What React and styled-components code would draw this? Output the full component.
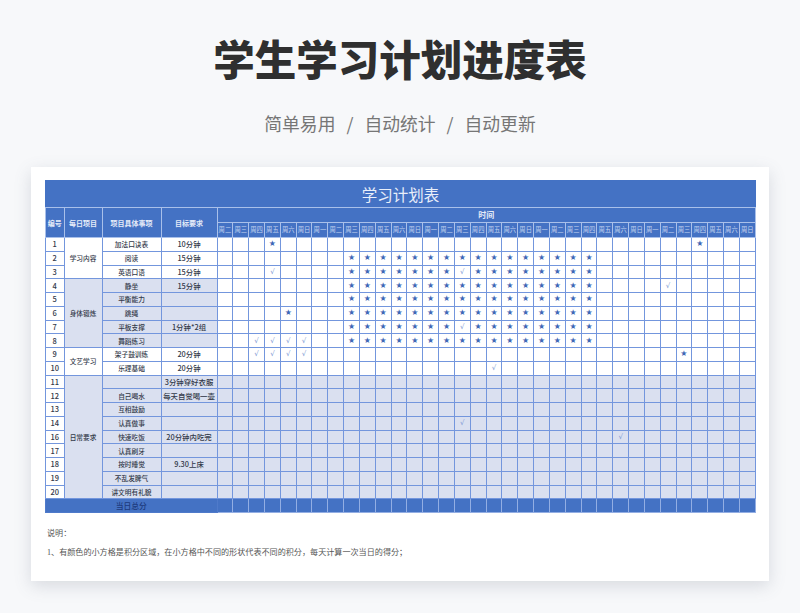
import React from 'react';
import styled, { createGlobalStyle } from 'styled-components';

const Global = createGlobalStyle`
  html, body { margin: 0; padding: 0; background: #f7f8fa; }
  #root { width: 800px; height: 613px; overflow: hidden; }
`;
const CJK = `"Noto Sans CJK SC", "Noto Sans", sans-serif`;
const BLUE = '#4472c4';
const GRID = '#7396dd';
const Page = styled.div`
  width: 800px; height: 613px; box-sizing: border-box; padding-top: 32px;
  display: flex; flex-direction: column; align-items: center;
  background: #f7f8fa; font-family: ${CJK};
`;
const Title = styled.h1`
  margin: 0; height: 52px; line-height: 52px; font-size: 41.5px; font-weight: 900; color: #2f2f2f;
`;
const Subtitle = styled.div`
  margin-top: 27px; height: 24px; line-height: 24px; font-size: 17.8px; color: #767676;
  display: flex; gap: 11px; white-space: pre;
`;
const Card = styled.section`
  margin-top: 32px; width: 738px; height: 414px; box-sizing: border-box; padding: 13px 14px 0 14px;
  background: #fff; box-shadow: 0 5px 16px rgba(90, 100, 120, 0.2);
`;
const Sheet = styled.table`
  width: 710px; table-layout: fixed; border-collapse: collapse; font-family: ${CJK};
  border: 1px solid ${GRID};
`;
const TitleCell = styled.th`
  height: 26px; padding: 0; background: ${BLUE}; color: #e9effa; font-size: 15.5px; font-weight: 400;
  border: 1px solid ${BLUE}; border-bottom: 1px solid #a9c0ea;
`;
const HeadCell = styled.th`
  padding: 0; background: ${BLUE}; color: #e4ebf8; font-size: ${p => p.$size || 7}px; font-weight: 700;
  border: 1px solid #a9c0ea; white-space: nowrap; overflow: hidden;
  height: 14px; line-height: 12px;
`;
const DayCell = styled.th`
  padding: 0; background: ${BLUE}; color: #c3d2ef; font-size: 6.3px; font-weight: 400;
  border: 1px solid #a9c0ea; white-space: nowrap; overflow: hidden; height: 14px; line-height: 12px;
`;
const Row = styled.tr`
  height: 13.75px;
`;
const Cell = styled.td`
  padding: 0; height: 12.75px; line-height: 12px; text-align: center; white-space: nowrap; overflow: hidden;
  border: 1px solid ${GRID}; font-size: ${p => p.$size || 6.7}px; font-weight: 500;
  color: ${p => p.$color || '#333a4a'};
  background: ${p => (p.$shade ? '#dae0f0' : '#fff')};
`;
const Mark = styled.td`
  padding: 0; height: 12.75px; line-height: 12px; text-align: center; overflow: hidden;
  border: 1px solid ${GRID}; font-size: ${p => (p.$check ? 7 : 8)}px; color: ${p => (p.$check ? '#7f9bd4' : '#3f68b6')};
  font-family: "DejaVu Sans", sans-serif;
  background: ${p => (p.$shade ? '#dae0f0' : '#fff')};
`;
const TotalLabel = styled.td`
  padding: 0; height: 13px; background: ${BLUE}; color: #1d3a7c; font-size: 7.8px; font-weight: 500;
  text-align: center; border: 1px solid #4f7aca;
`;
const TotalCell = styled.td`
  padding: 0; background: ${BLUE}; border: 1px solid #93aee3;
`;
const Notes = styled.div`
  margin-top: 15px; padding-left: 2px; color: #555; font-family: "Liberation Serif", "Noto Sans CJK SC", serif;
  font-size: 8.1px; line-height: 12px;
`;
const Note = styled.p`
  margin: 0 0 7px; white-space: nowrap;
`;

const dayNames = ['周二','周三','周四','周五','周六','周日','周一','周二','周三','周四','周五','周六','周日','周一','周二','周三','周四','周五','周六','周日','周一','周二','周三','周四','周五','周六','周日','周一','周二','周三','周四','周五','周六','周日'];

const rows = [
  { n: 1, item: '加法口诀表', goal: '10分钟', marks: { 3: 's', 30: 's' } },
  { n: 2, item: '阅读', goal: '15分钟', band: 1 },
  { n: 3, item: '英语口语', goal: '15分钟', band: 1, marks: { 3: 'c', 15: 'c' } },
  { n: 4, item: '静坐', goal: '15分钟', band: 1, shade: 1, marks: { 28: 'c' } },
  { n: 5, item: '平衡能力', goal: '', band: 1, shade: 1 },
  { n: 6, item: '跳绳', goal: '', band: 1, shade: 1, marks: { 4: 's' } },
  { n: 7, item: '平板支撑', goal: '1分钟*2组', band: 1, shade: 1, marks: { 15: 'c' } },
  { n: 8, item: '舞蹈练习', goal: '', band: 1, shade: 1, marks: { 2: 'c', 3: 'c', 4: 'c', 5: 'c' } },
  { n: 9, item: '架子鼓训练', goal: '20分钟', marks: { 2: 'c', 3: 'c', 4: 'c', 5: 'c', 29: 's' } },
  { n: 10, item: '乐理基础', goal: '20分钟', marks: { 17: 'c' } },
  { n: 11, item: '', goal: '3分钟穿好衣服', shade: 1, grey: 1 },
  { n: 12, item: '自己喝水', goal: '每天自觉喝一壶', shade: 1, grey: 1 },
  { n: 13, item: '互相鼓励', goal: '', shade: 1, grey: 1 },
  { n: 14, item: '认真做事', goal: '', shade: 1, grey: 1, marks: { 15: 'c' } },
  { n: 16, item: '快速吃饭', goal: '20分钟内吃完', shade: 1, grey: 1, marks: { 25: 'c' } },
  { n: 17, item: '认真刷牙', goal: '', shade: 1, grey: 1 },
  { n: 18, item: '按时睡觉', goal: '9.30上床', shade: 1, grey: 1 },
  { n: 19, item: '不乱发脾气', goal: '', shade: 1, grey: 1 },
  { n: 20, item: '讲文明有礼貌', goal: '', shade: 1, grey: 1 },
];
const groups = { 0: { label: '学习内容', span: 3 }, 3: { label: '身体锻炼', span: 5, shade: 1 }, 8: { label: '文艺学习', span: 2 }, 10: { label: '日常要求', span: 9, shade: 1 } };

const markFor = (r, k) => {
  if (r.marks && r.marks[k]) return r.marks[k];
  if (r.band && k >= 8 && k <= 23) return 's';
  return null;
};

export default function App() {
  return (
    <Page>
      <Global />
      <Title>学生学习计划进度表</Title>
      <Subtitle>
        <span>简单易用</span><span>/</span><span>自动统计</span><span>/</span><span>自动更新</span>
      </Subtitle>
      <Card>
        <Sheet>
          <colgroup>
            <col style={{ width: 18.5 }} />
            <col style={{ width: 38 }} />
            <col style={{ width: 59 }} />
            <col style={{ width: 56 }} />
            {dayNames.map((_, i) => <col key={i} style={{ width: 538.5 / 34 }} />)}
          </colgroup>
          <thead>
            <tr><TitleCell colSpan={38}>学习计划表</TitleCell></tr>
            <tr>
              <HeadCell rowSpan={2}>编号</HeadCell>
              <HeadCell rowSpan={2}>每日项目</HeadCell>
              <HeadCell rowSpan={2}>项目具体事项</HeadCell>
              <HeadCell rowSpan={2}>目标要求</HeadCell>
              <HeadCell colSpan={34} $size={8}>时间</HeadCell>
            </tr>
            <tr>{dayNames.map((d, i) => <DayCell key={i}>{d}</DayCell>)}</tr>
          </thead>
          <tbody>
            {rows.map((r, i) => (
              <Row key={r.n}>
                <Cell $size={7.5}>{r.n}</Cell>
                {groups[i] && <Cell rowSpan={groups[i].span} $shade={groups[i].shade}>{groups[i].label}</Cell>}
                <Cell $shade={r.shade}>{r.item}</Cell>
                <Cell $shade={r.shade} $size={7.4}>{r.goal}</Cell>
                {dayNames.map((_, k) => {
                  const m = markFor(r, k);
                  return <Mark key={k} $shade={r.grey} $check={m === 'c'}>{m === 's' ? '★' : m === 'c' ? '√' : ''}</Mark>;
                })}
              </Row>
            ))}
            <tr>
              <TotalLabel colSpan={4}>当日总分</TotalLabel>
              {dayNames.map((_, k) => <TotalCell key={k} />)}
            </tr>
          </tbody>
        </Sheet>
        <Notes>
          <Note>说明：</Note>
          <Note>1、有颜色的小方格是积分区域，在小方格中不同的形状代表不同的积分，每天计算一次当日的得分；</Note>
        </Notes>
      </Card>
    </Page>
  );
}
